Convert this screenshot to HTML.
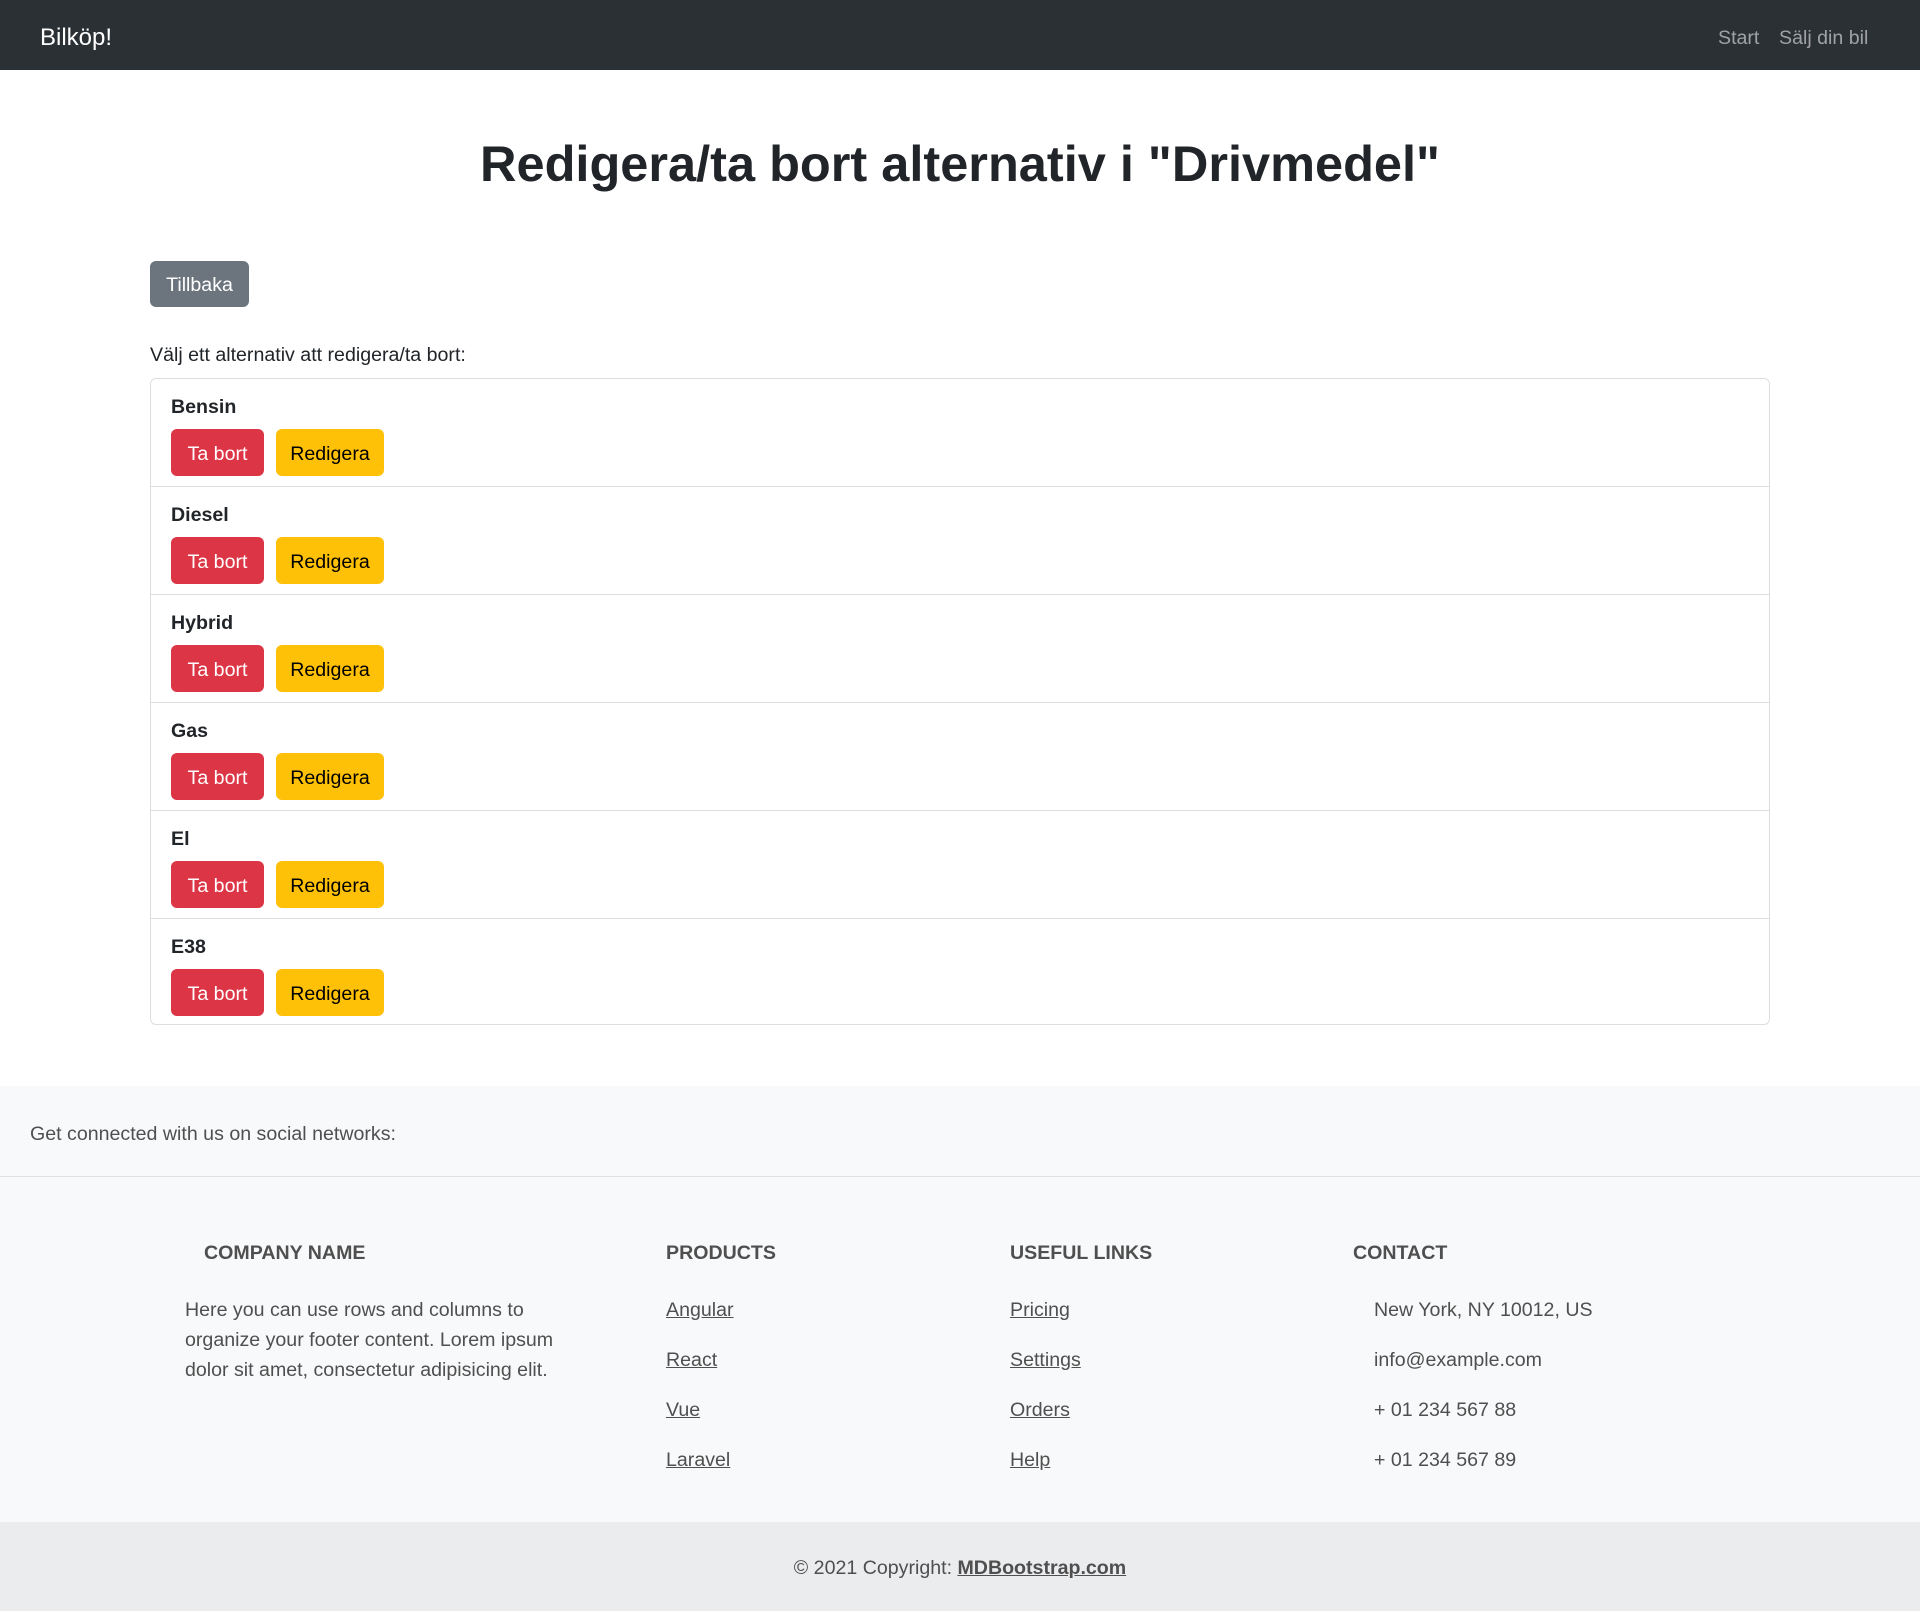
<!DOCTYPE html>
<html><head><meta charset="utf-8"><style>
*{box-sizing:border-box;margin:0;padding:0}
body{width:1920px;height:1611px;font-family:"Liberation Sans",sans-serif;color:#212529;background:#fff;font-size:19.6px;position:relative;overflow:hidden}
.abs{position:absolute;white-space:nowrap}
nav{position:absolute;left:0;top:0;width:1920px;height:70px;background:#2b3035}
.brand{left:40px;top:24px;font-size:24px;color:#fff}
.nl{top:27px;font-size:19.6px;color:rgba(255,255,255,.55)}
h1{position:absolute;left:0;width:1920px;text-align:center;top:134px;font-size:50.5px;font-weight:bold;line-height:60px}
.btn{position:absolute;border-radius:6px;font-size:19.6px;display:flex;align-items:center;justify-content:center;padding-top:3px}
.list{position:absolute;left:150px;top:378px;width:1620px;height:647px;border:1px solid #dcdfe2;border-radius:6px}
.item{position:relative;height:108px;border-bottom:1px solid #dcdfe2}
.item:last-child{border-bottom:none}
.item b{position:absolute;left:20px;top:17px;font-size:19.6px}
.red{left:20px;top:50px;width:93px;height:47px;background:#dc3545;color:#fff}
.yel{left:125px;top:50px;width:108px;height:47px;background:#ffc107;color:#000}
.foot{position:absolute;left:0;top:1086px;width:1920px;height:436px;background:#f8f9fa;color:#4f4f4f}
.h{font-weight:bold;font-size:19.6px;top:1242px;color:#4f4f4f}
.lk{text-decoration:underline;color:#4f4f4f}
.copy{position:absolute;left:0;top:1522px;width:1920px;height:89px;background:#ebecee;text-align:center;line-height:93px;color:#4f4f4f}
</style></head><body>
<nav></nav>
<div class="abs brand">Bilköp!</div>
<div class="abs nl" style="left:1718px">Start</div>
<div class="abs nl" style="left:1779px">Sälj din bil</div>
<h1>Redigera/ta bort alternativ i "Drivmedel"</h1>
<div class="btn" style="left:150px;top:261px;width:99px;height:46px;background:#6c757d;color:#fff">Tillbaka</div>
<div class="abs" style="left:150px;top:344px">Välj ett alternativ att redigera/ta bort:</div>
<div class="list">
<div class="item"><b>Bensin</b><div class="btn red">Ta bort</div><div class="btn yel">Redigera</div></div>
<div class="item"><b>Diesel</b><div class="btn red">Ta bort</div><div class="btn yel">Redigera</div></div>
<div class="item"><b>Hybrid</b><div class="btn red">Ta bort</div><div class="btn yel">Redigera</div></div>
<div class="item"><b>Gas</b><div class="btn red">Ta bort</div><div class="btn yel">Redigera</div></div>
<div class="item"><b>El</b><div class="btn red">Ta bort</div><div class="btn yel">Redigera</div></div>
<div class="item"><b>E38</b><div class="btn red">Ta bort</div><div class="btn yel">Redigera</div></div>
</div>
<div class="foot"></div>
<div class="abs" style="left:30px;top:1123px;color:#4f4f4f">Get connected with us on social networks:</div>
<div style="position:absolute;left:0;top:1176px;width:1920px;height:1px;background:#dee2e6"></div>
<div class="abs h" style="left:204px">COMPANY NAME</div>
<div class="abs h" style="left:666px">PRODUCTS</div>
<div class="abs h" style="left:1010px">USEFUL LINKS</div>
<div class="abs h" style="left:1353px">CONTACT</div>
<div class="abs" style="left:185px;top:1295px;line-height:30px;color:#4f4f4f;white-space:normal;width:400px">Here you can use rows and columns to organize your footer content. Lorem ipsum dolor sit amet, consectetur adipisicing elit.</div>
<div class="abs lk" style="left:666px;top:1299px">Angular</div>
<div class="abs lk" style="left:666px;top:1349px">React</div>
<div class="abs lk" style="left:666px;top:1399px">Vue</div>
<div class="abs lk" style="left:666px;top:1449px">Laravel</div>
<div class="abs lk" style="left:1010px;top:1299px">Pricing</div>
<div class="abs lk" style="left:1010px;top:1349px">Settings</div>
<div class="abs lk" style="left:1010px;top:1399px">Orders</div>
<div class="abs lk" style="left:1010px;top:1449px">Help</div>
<div class="abs" style="left:1374px;top:1299px;color:#4f4f4f">New York, NY 10012, US</div>
<div class="abs" style="left:1374px;top:1349px;color:#4f4f4f">info@example.com</div>
<div class="abs" style="left:1374px;top:1399px;color:#4f4f4f">+ 01 234 567 88</div>
<div class="abs" style="left:1374px;top:1449px;color:#4f4f4f">+ 01 234 567 89</div>
<div class="copy">© 2021 Copyright: <b style="text-decoration:underline">MDBootstrap.com</b></div>
</body></html>
